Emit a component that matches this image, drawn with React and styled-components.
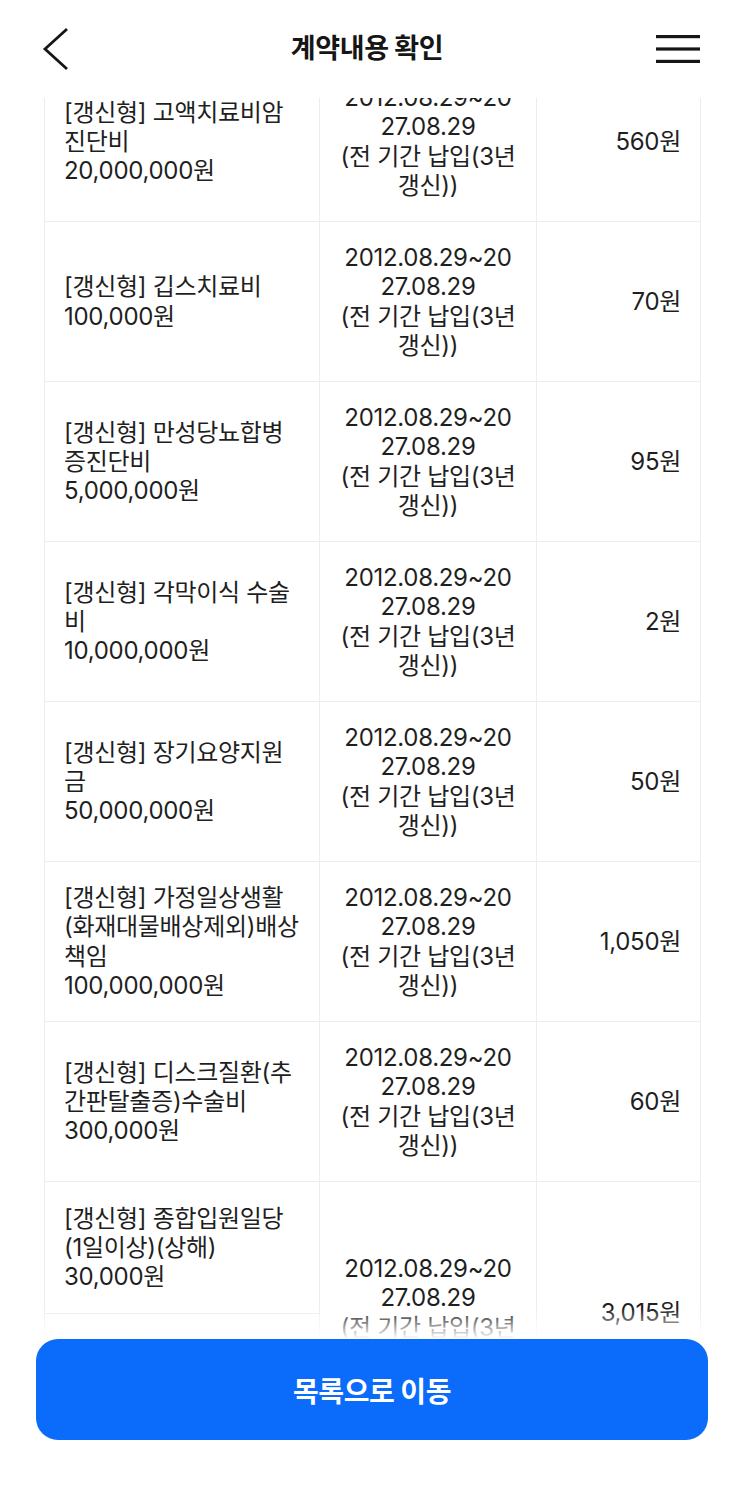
import styled, { createGlobalStyle } from "styled-components";

const GlobalStyle = createGlobalStyle`
    html, body {
        margin: 0;
        padding: 0;
        background: #ffffff;
    }
    body {
        font-family: "Inter", "Noto Sans CJK KR", sans-serif;
        color: #1f1f1f;
    }
`;

const PERIOD = "2012.08.29~20\n27.08.29\n(전 기간 납입(3년\n갱신))";

const rows = [
    { items: ["[갱신형] 고액치료비암\n진단비\n20,000,000원"], price: "560원" },
    { items: ["[갱신형] 깁스치료비\n100,000원"], price: "70원" },
    { items: ["[갱신형] 만성당뇨합병\n증진단비\n5,000,000원"], price: "95원" },
    { items: ["[갱신형] 각막이식 수술\n비\n10,000,000원"], price: "2원" },
    { items: ["[갱신형] 장기요양지원\n금\n50,000,000원"], price: "50원" },
    { items: ["[갱신형] 가정일상생활\n(화재대물배상제외)배상\n책임\n100,000,000원"], price: "1,050원" },
    { items: ["[갱신형] 디스크질환(추\n간판탈출증)수술비\n300,000원"], price: "60원" },
    {
        items: [
            "[갱신형] 종합입원일당\n(1일이상)(상해)\n30,000원",
            "[갱신형] 종합입원일당\n(1일이상)(질병)\n30,000원",
        ],
        price: "3,015원",
    },
];

const Page = styled.div`
    display: flex;
    flex-direction: column;
    height: 100vh;
    background: #ffffff;
`;

const Header = styled.header`
    flex: none;
    height: 98px;
    display: flex;
    align-items: center;
    justify-content: space-between;
    padding: 0 42px 0 34px;
    background: #ffffff;
    position: relative;
    z-index: 2;
`;

const IconButton = styled.button`
    border: 0;
    background: none;
    padding: 0;
    width: 44px;
    height: 44px;
    display: flex;
    align-items: center;
    justify-content: center;
    cursor: pointer;
`;

const Title = styled.h1`
    margin: 0 0 5px 0;
    font-family: "Noto Sans CJK KR", sans-serif;
    font-size: 27px;
    font-weight: 600;
    color: #161616;
    letter-spacing: -0.4px;
`;

const ScrollArea = styled.div`
    flex: 1;
    overflow: hidden;
    position: relative;
`;

const Table = styled.table`
    border-collapse: collapse;
    table-layout: fixed;
    width: 656px;
    margin: -37px 0 0 44px;
    font-size: 24px;
    line-height: 29.3px;
    letter-spacing: -0.3px;
`;

const Cell = styled.td`
    border: 1px solid #ededed;
    padding: 0 ${({ $align }) => ($align === "center" ? "6px" : "19px")};
    height: ${({ $height }) => $height}px;
    vertical-align: middle;
    text-align: ${({ $align }) => $align || "left"};
    white-space: pre;
    color: #1f1f1f;
`;

const Footer = styled.div`
    flex: none;
    position: relative;
    padding: 0 34px 60px 36px;
    background: #ffffff;

    &::before {
        content: "";
        position: absolute;
        left: 0;
        right: 0;
        top: -30px;
        height: 30px;
        background: linear-gradient(rgba(255, 255, 255, 0), #ffffff);
    }
`;

const PrimaryButton = styled.button`
    width: 100%;
    height: 101px;
    border: 0;
    border-radius: 22px;
    background: #0b6cfb;
    color: #ffffff;
    font-family: "Noto Sans CJK KR", sans-serif;
    font-size: 28px;
    font-weight: 600;
    letter-spacing: -0.4px;
    cursor: pointer;
`;

function BackIcon() {
    return (
        <svg width="30" height="44" viewBox="0 0 30 44" fill="none">
            <polyline points="26,2 4,22 26,42" stroke="#161616" strokeWidth="2.8" strokeLinejoin="miter" />
        </svg>
    );
}

function MenuIcon() {
    return (
        <svg width="44" height="30" viewBox="0 0 44 30" fill="none">
            <rect x="0" y="1" width="44" height="3.2" fill="#161616" />
            <rect x="0" y="13.4" width="44" height="3.2" fill="#161616" />
            <rect x="0" y="25.8" width="44" height="3.2" fill="#161616" />
        </svg>
    );
}

export default function App() {
    return (
        <>
            <GlobalStyle />
            <Page>
                <Header>
                    <IconButton aria-label="뒤로">
                        <BackIcon />
                    </IconButton>
                    <Title>계약내용 확인</Title>
                    <IconButton aria-label="메뉴">
                        <MenuIcon />
                    </IconButton>
                </Header>
                <ScrollArea>
                    <Table>
                        <colgroup>
                            <col style={{ width: 275 }} />
                            <col style={{ width: 217 }} />
                            <col style={{ width: 164 }} />
                        </colgroup>
                        <tbody>
                            {rows.map((row, i) =>
                                row.items.map((item, j) => {
                                    const span = row.items.length;
                                    const h = span > 1 ? (j === 0 ? 131 : 129) : 159;
                                    return (
                                        <tr key={`${i}-${j}`}>
                                            <Cell $height={h}>{item}</Cell>
                                            {j === 0 && (
                                                <>
                                                    <Cell rowSpan={span} $align="center">{PERIOD}</Cell>
                                                    <Cell rowSpan={span} $align="right">{row.price}</Cell>
                                                </>
                                            )}
                                        </tr>
                                    );
                                })
                            )}
                        </tbody>
                    </Table>
                </ScrollArea>
                <Footer>
                    <PrimaryButton>목록으로 이동</PrimaryButton>
                </Footer>
            </Page>
        </>
    );
}
